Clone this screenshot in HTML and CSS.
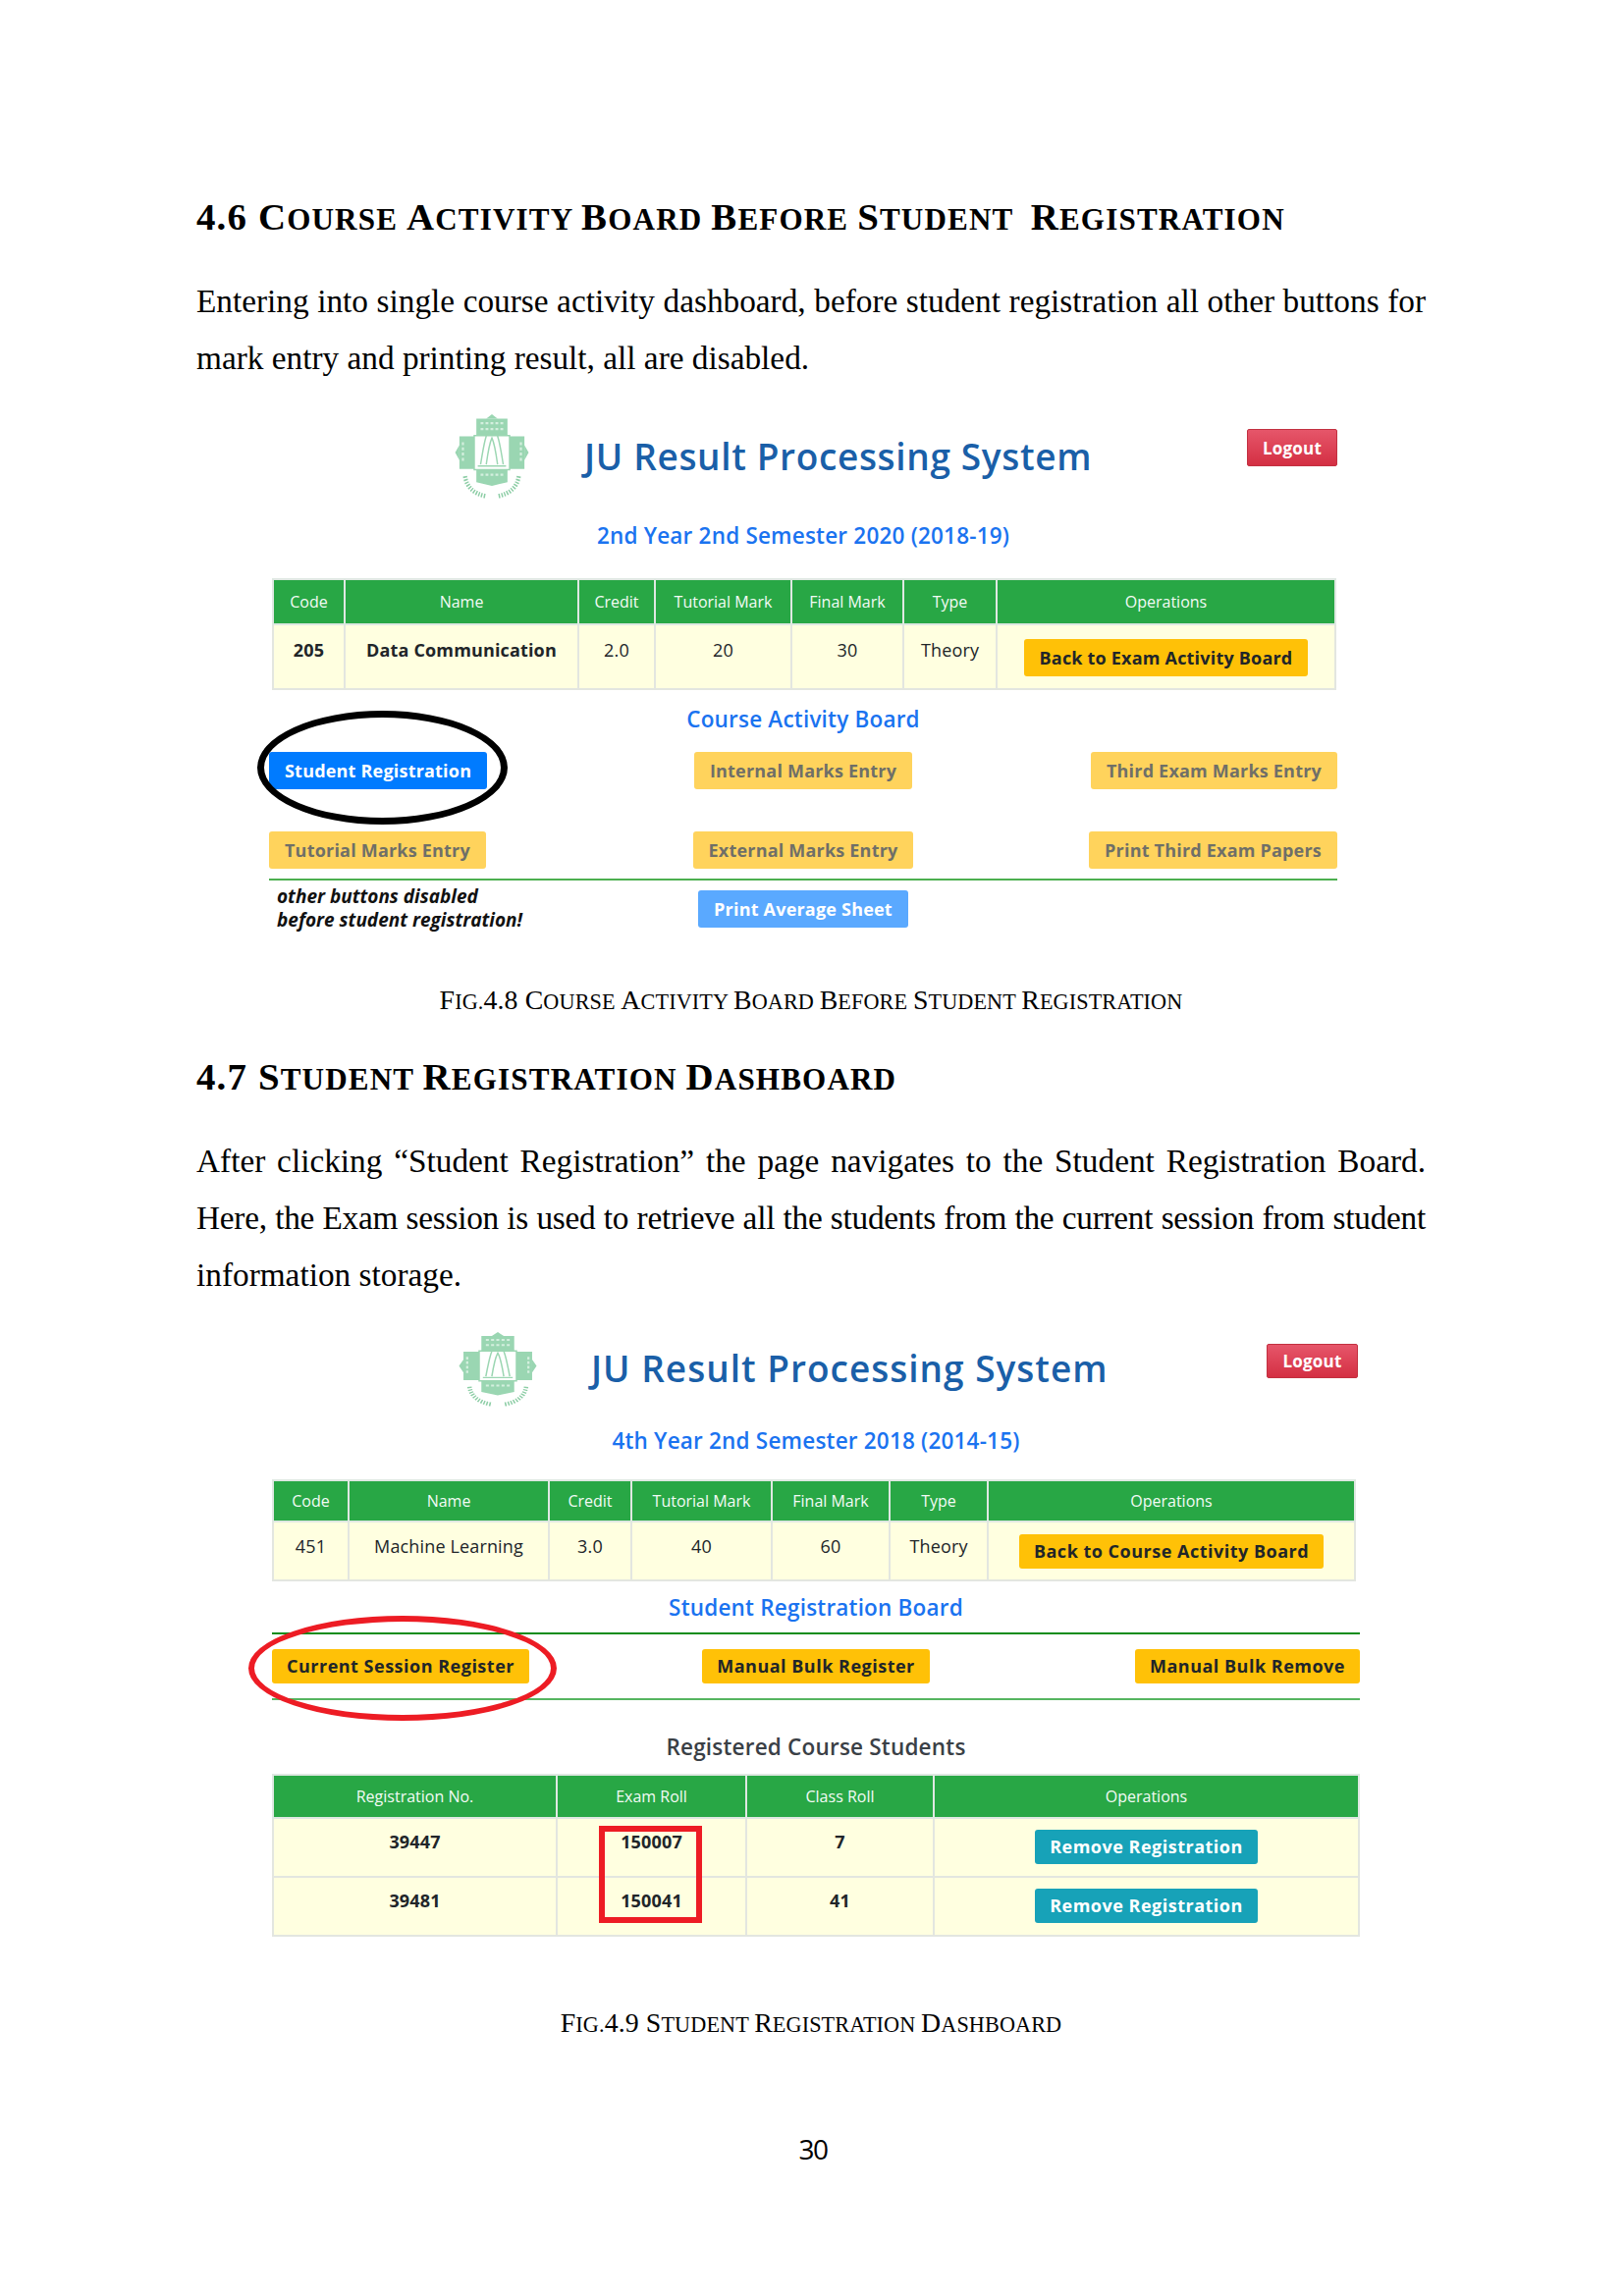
FILE: index.html
```html
<!DOCTYPE html>
<html lang="en">
<head>
<meta charset="utf-8">
<title>Course Activity Board</title>
<link rel="stylesheet" href="styles.css">
</head>
<body>
<main class="page">
  <h2 class="heading h-first"><span class="cap">4.6 C</span>ourse <span class="cap">A</span>ctivity <span class="cap">B</span>oard <span class="cap">B</span>efore <span class="cap">S</span>tudent &nbsp;<span class="cap">R</span>egistration</h2>
  <p class="para">Entering into single course activity dashboard, before student registration all other buttons for mark entry and printing result, all are disabled.</p>

  <figure class="shot shot-a">
    <header class="app-head">
      <svg class="logo" viewBox="0 0 100 113" preserveAspectRatio="none" aria-hidden="true">
        <path class="logo-fill" d="M28 6h44v23h-44zM4 30h21v44H4zM75 30h21v44H75zM28 75h44v17l-22 5-22-5z"/>
        <path class="logo-fill" d="M4 42L-2 52l6 10zM96 42l6 10-6 10zM42 6l8-6 8 6z"/>
        <path class="logo-line" d="M25 29h50v46H25zM34 68C38 44 42 20 50 16c8 4 12 28 16 52M42 68c2-14 4-28 8-36 4 8 6 22 8 36M30 70h40"/>
        <path class="logo-dots" d="M12 84c2 14 12 24 30 27M88 84c-2 14-12 24-30 27"/>
        <path class="logo-pale" d="M34 12h32M34 20h32M9 38v28M91 38v28M34 82h32"/>
      </svg>
      <h1 class="app-title">JU Result Processing System</h1>
      <a class="logout">Logout</a>
    </header>
    <h3 class="sub sub-a1">2nd Year 2nd Semester 2020 (2018-19)</h3>
    <table class="grid-table table-a">
      <colgroup><col class="a1"><col class="a2"><col class="a3"><col class="a4"><col class="a5"><col class="a6"><col></colgroup>
      <thead><tr><th>Code</th><th>Name</th><th>Credit</th><th>Tutorial Mark</th><th>Final Mark</th><th>Type</th><th>Operations</th></tr></thead>
      <tbody><tr><td class="strong">205</td><td class="strong">Data Communication</td><td>2.0</td><td>20</td><td>30</td><td>Theory</td><td><a class="btn amber">Back to Exam Activity Board</a></td></tr></tbody>
    </table>
    <h3 class="sub sub-a2">Course Activity Board</h3>
    <div class="actions actions-1">
      <a class="btn blue">Student Registration</a>
      <a class="btn amber off">Internal Marks Entry</a>
      <a class="btn amber off">Third Exam Marks Entry</a>
    </div>
    <div class="actions actions-2">
      <a class="btn amber off">Tutorial Marks Entry</a>
      <a class="btn amber off">External Marks Entry</a>
      <a class="btn amber off">Print Third Exam Papers</a>
    </div>
    <div class="actions actions-3">
      <em class="note">other buttons disabled<br>before student registration!</em>
      <a class="btn blue off-blue">Print Average Sheet</a>
    </div>
    <div class="mark ring-black"></div>
  </figure>
  <p class="caption cap-a"><span class="cap">F</span>ig.<span class="cap">4.8 C</span>ourse <span class="cap">A</span>ctivity <span class="cap">B</span>oard <span class="cap">B</span>efore <span class="cap">S</span>tudent <span class="cap">R</span>egistration</p>

  <h2 class="heading h-second"><span class="cap">4.7 S</span>tudent <span class="cap">R</span>egistration <span class="cap">D</span>ashboard</h2>
  <p class="para">After clicking “Student Registration” the page navigates to the Student Registration Board. <span class="tight">Here, the Exam session is used to retrieve all the students from the current session from student</span> information storage.</p>

  <figure class="shot shot-b">
    <header class="app-head">
      <svg class="logo" viewBox="0 0 100 113" preserveAspectRatio="none" aria-hidden="true">
        <path class="logo-fill" d="M28 6h44v23h-44zM4 30h21v44H4zM75 30h21v44H75zM28 75h44v17l-22 5-22-5z"/>
        <path class="logo-fill" d="M4 42L-2 52l6 10zM96 42l6 10-6 10zM42 6l8-6 8 6z"/>
        <path class="logo-line" d="M25 29h50v46H25zM34 68C38 44 42 20 50 16c8 4 12 28 16 52M42 68c2-14 4-28 8-36 4 8 6 22 8 36M30 70h40"/>
        <path class="logo-dots" d="M12 84c2 14 12 24 30 27M88 84c-2 14-12 24-30 27"/>
        <path class="logo-pale" d="M34 12h32M34 20h32M9 38v28M91 38v28M34 82h32"/>
      </svg>
      <h1 class="app-title">JU Result Processing System</h1>
      <a class="logout">Logout</a>
    </header>
    <h3 class="sub sub-b1">4th Year 2nd Semester 2018 (2014-15)</h3>
    <table class="grid-table table-b">
      <colgroup><col class="b1"><col class="b2"><col class="b3"><col class="b4"><col class="b5"><col class="b6"><col></colgroup>
      <thead><tr><th>Code</th><th>Name</th><th>Credit</th><th>Tutorial Mark</th><th>Final Mark</th><th>Type</th><th>Operations</th></tr></thead>
      <tbody><tr><td>451</td><td>Machine Learning</td><td>3.0</td><td>40</td><td>60</td><td>Theory</td><td><a class="btn amber">Back to Course Activity Board</a></td></tr></tbody>
    </table>
    <h3 class="sub sub-b2">Student Registration Board</h3>
    <div class="actions register-row">
      <a class="btn amber">Current Session Register</a>
      <a class="btn amber">Manual Bulk Register</a>
      <a class="btn amber">Manual Bulk Remove</a>
    </div>
    <h3 class="sub sub-b3">Registered Course Students</h3>
    <table class="grid-table table-c">
      <colgroup><col class="c1"><col class="c2"><col class="c3"><col></colgroup>
      <thead><tr><th>Registration No.</th><th>Exam Roll</th><th>Class Roll</th><th>Operations</th></tr></thead>
      <tbody>
        <tr><td class="strong">39447</td><td class="strong">150007</td><td class="strong">7</td><td><a class="btn teal">Remove Registration</a></td></tr>
        <tr><td class="strong">39481</td><td class="strong">150041</td><td class="strong">41</td><td><a class="btn teal">Remove Registration</a></td></tr>
      </tbody>
    </table>
    <div class="mark ring-red"></div>
    <div class="mark box-red"></div>
  </figure>
  <p class="caption cap-b"><span class="cap">F</span>ig.<span class="cap">4.9 S</span>tudent <span class="cap">R</span>egistration <span class="cap">D</span>ashboard</p>
  <footer class="page-no">30</footer>
</main>
</body>
</html>
```

FILE: styles.css
```css
* { box-sizing: border-box; }
html, body { margin: 0; background: #fff; }
body { width: 1654px; height: 2339px; overflow: hidden; font-family: "Liberation Serif", serif; color: #000; }
.page { padding: 192px 0 0 200px; width: 1452px; }

.heading { margin: 0; height: 58px; line-height: 58px; font-size: 31.1px; font-weight: 700; letter-spacing: 1.15px; text-transform: uppercase; white-space: nowrap; }
.heading .cap { font-size: 38.9px; }
.h-second { margin-top: 29px; }
.para { margin: 28px 0 0; font-size: 33.3px; line-height: 57.7px; text-align: justify; }
.tight { word-spacing: -4px; letter-spacing: -0.25px; }
.caption { margin: 0; height: 40px; line-height: 40px; font-size: 22.2px; letter-spacing: 0.12px; text-transform: uppercase; text-align: center; white-space: nowrap; }
.caption .cap { font-size: 27.8px; }
.cap-a { margin-top: 53px; }
.cap-b { margin-top: 68px; }
.page-no { margin: 88px 0 0 4px; height: 40px; line-height: 40px; font-family: "Open Sans", sans-serif; font-size: 28px; letter-spacing: -1.5px; text-align: center; }

.shot { position: relative; margin: 0; font-family: "Open Sans", "Noto Sans", sans-serif; font-size: 18px; color: #212529; }
.shot-a { margin: 29px 0 0 74px; width: 1088px; }
.shot-b { margin: 29px 0 0 77px; width: 1108px; }

.app-head { display: flex; align-items: flex-start; }
.shot-a .app-head { height: 85px; padding-left: 191px; }
.shot-b .app-head { height: 75px; padding-left: 192px; }
.logo { width: 72px; height: 85px; flex: none; overflow: visible; }
.shot-b .logo { width: 76px; height: 75px; }
.logo-fill { fill: #9ad6b2; }
.logo-line { fill: none; stroke: #9bd6b2; stroke-width: 2; }
.logo-dots { fill: none; stroke: #8ccda5; stroke-width: 6; stroke-dasharray: 2 2; }
.logo-pale { fill: none; stroke: #d4efde; stroke-width: 3; stroke-dasharray: 4 3; }

.app-title { margin: 0; font-size: 37px; line-height: 48px; font-weight: 600; letter-spacing: 0.65px; color: #1a5fa8; white-space: nowrap; }
.shot-a .app-title { margin: 19px 0 0 58px; }
.shot-b .app-title { margin: 13px 0 0 57px; letter-spacing: 1px; }

.logout { margin-left: auto; width: 92px; height: 38px; display: flex; align-items: center; justify-content: center; border-radius: 2px; border: 1px solid #c23040; background: linear-gradient(#e6566a, #d42f43); color: #fff; font-weight: 700; font-size: 17px; letter-spacing: 0.2px; }
.shot-a .logout { margin-top: 15px; }
.shot-b .logout { margin: 12px 2px 0 auto; width: 93px; height: 35px; }

.sub { margin: 0; height: 30px; line-height: 30px; font-size: 22.5px; font-weight: 600; letter-spacing: 0.2px; color: #1a73f0; text-align: center; white-space: nowrap; }
.sub-a1 { margin-top: 24px; }
.sub-a2 { margin-top: 15px; }
.sub-b1 { margin-top: 21px; }
.sub-b2 { margin-top: 12px; }
.sub-b3 { margin-top: 33px; color: #3a4046; }

.grid-table { border-collapse: collapse; table-layout: fixed; }
.grid-table th { height: 44px; padding: 0; background: #28a745; border: 2px solid #dfe8e2; font-size: 16px; font-weight: 400; color: #f3fbf5; text-align: center; white-space: nowrap; }
.grid-table td { padding: 14px 0 0; background: #ffffe0; border: 2px solid #e3e6e0; line-height: 24px; font-size: 18px; letter-spacing: 0.15px; text-align: center; vertical-align: top; white-space: nowrap; }
.grid-table .strong { font-weight: 700; }
.table-a { margin: 28px 0 0 3px; width: 1084px; }
.table-a th { height: 46px; }
.table-a td { height: 66px; padding-top: 13px; }
.table-a td:last-child { padding-top: 14px; }
.table-b { margin: 24px 0 0; width: 1104px; }
.table-b th { height: 42px; }
.table-b td { height: 60px; padding-top: 12px; }
.table-c { margin: 12px 0 0; width: 1108px; }
.table-c td { height: 60px; padding-top: 11px; }

.a1 { width: 73px; } .a2 { width: 238px; } .a3 { width: 78px; } .a4 { width: 139px; } .a5 { width: 114px; } .a6 { width: 95px; }
.b1 { width: 77px; } .b2 { width: 204px; } .b3 { width: 84px; } .b4 { width: 143px; } .b5 { width: 120px; } .b6 { width: 100px; }
.c1 { width: 289px; } .c2 { width: 193px; } .c3 { width: 191px; }

.btn { display: inline-flex; align-items: center; justify-content: center; height: 38px; padding: 0 16px; border-radius: 3px; font-size: 18px; font-weight: 700; letter-spacing: 0.2px; white-space: nowrap; }
.shot-b .btn { padding: 0 15px; letter-spacing: 0.5px; }
.amber { background: #ffc107; color: #212529; }
.blue { background: #007bff; color: #fff; }
.teal { background: #17a2b8; color: #fff; height: 35px; }
.off { background: #ffd35c; color: #6f6f68; }
.off-blue { background: #5aa9ff; }
.shot-b .btn.amber { height: 35px; }

.actions { display: grid; grid-template-columns: 1fr 1fr 1fr; align-items: start; }
.actions > :nth-child(1) { justify-self: start; }
.actions > :nth-child(2) { justify-self: center; }
.actions > :nth-child(3) { justify-self: end; }
.actions-1 { margin-top: 18px; }
.actions-2 { margin-top: 43px; padding-bottom: 10px; border-bottom: 2px solid #4caf50; }
.actions-3 { margin-top: 10px; height: 39px; }
.note { margin: -6px 0 0 8px; font-size: 19px; line-height: 24px; font-weight: 700; color: #111; white-space: nowrap; }
.register-row { margin-top: 10px; padding: 15px 0; border-top: 2px solid #0c8c1c; border-bottom: 2px solid #55b560; }

.mark { position: absolute; pointer-events: none; }
.ring-black { left: -12px; top: 302px; width: 255px; height: 116px; border: 7px solid #000; border-radius: 50%; }
.ring-red { left: -24px; top: 289px; width: 314px; height: 107px; border: 6px solid #ed1c24; border-radius: 50%; }
.box-red { left: 333px; top: 503px; width: 105px; height: 99px; border: 6px solid #ed1c24; }
```
